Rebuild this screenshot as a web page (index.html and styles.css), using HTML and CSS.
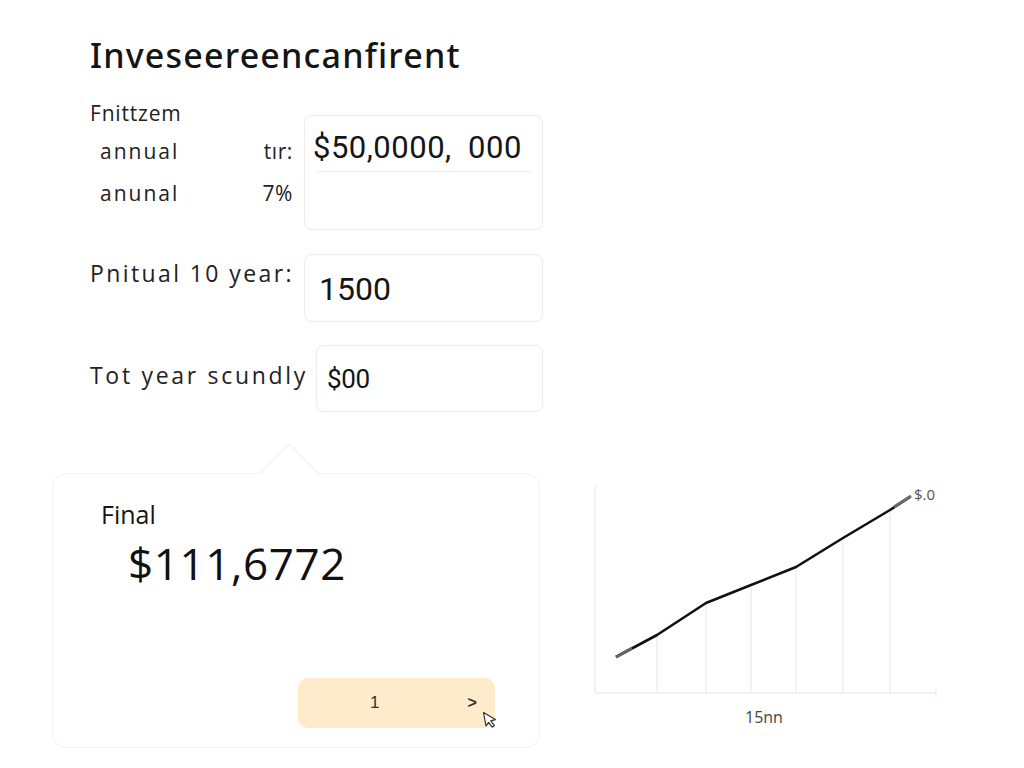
FILE: index.html
```html
<!DOCTYPE html>
<html>
<head>
<meta charset="utf-8">
<link rel="stylesheet" href="styles.css">
</head>
<body>
<div class="page">
  <section class="form">
    <h1 class="title">Inveseereencanfirent</h1>
    <div class="row row1">
      <div class="labels">
        <div class="lbl l1">Fnittzem</div>
        <div class="lbl l2"><span class="w">annual</span><span>tır:</span></div>
        <div class="lbl l3"><span class="w">anunal</span><span>7%</span></div>
      </div>
      <div class="box box1">
        <div class="val v1">$50,0000,&nbsp; 000</div>
        <div class="underline"></div>
      </div>
    </div>
    <div class="row row2">
      <div class="lbl rl2">Pnitual 10 year:</div>
      <div class="box box2"><div class="val v2">1500</div></div>
    </div>
    <div class="row row3">
      <div class="lbl rl3">Tot year scundly</div>
      <div class="box box3"><div class="val v3">$00</div></div>
    </div>
  </section>
  <section class="bottom">
    <div class="card">
      <div class="final">Final</div>
      <div class="amount">$111,6772</div>
      <div class="btn">
        <span class="num">1</span>
        <span class="arrow">&gt;</span>
        <svg class="cursor" width="17" height="18" viewBox="0 0 17 18"><path d="M1.5 1.5 L4 15 L6.6 11.4 L10.2 16.2 L12.4 14.6 L8.8 9.8 L13.4 8.6 Z" fill="#fff" stroke="#333" stroke-width="1.2" stroke-linejoin="round"/></svg>
      </div>
    </div>
    <div class="chart">
      <svg width="400" height="290" viewBox="0 0 400 290">
        <g stroke="#e3eef3" stroke-width="1.2">
          <line x1="97" y1="175" x2="97" y2="233"/>
          <line x1="146" y1="143" x2="146" y2="233"/>
          <line x1="191" y1="125" x2="191" y2="233"/>
          <line x1="236" y1="107" x2="236" y2="233"/>
          <line x1="283" y1="78" x2="283" y2="233"/>
          <line x1="330" y1="50" x2="330" y2="233"/>
        </g>
        <g stroke="#e6e8ea" stroke-width="1.2">
          <line x1="35" y1="26" x2="35" y2="233"/>
          <line x1="35" y1="233" x2="376" y2="233"/>
          <line x1="376" y1="229" x2="376" y2="237"/>
        </g>
        <polyline points="56,197 97,175 146,143 191,125 236,107 283,78 330,50 350,37" fill="none" stroke="#111" stroke-width="2.6" stroke-linejoin="round"/>
        <line x1="56" y1="197" x2="72" y2="188" stroke="#666" stroke-width="3"/>
        <line x1="334" y1="47" x2="351" y2="36" stroke="#6a6a6a" stroke-width="3.2"/>
        <text x="354" y="40" class="ylabel">$.0</text>
        <text x="185" y="263" class="xlabel">15nn</text>
      </svg>
    </div>
  </section>
</div>
</body>
</html>
```

FILE: styles.css
```css
* { box-sizing: border-box; }
html, body { margin: 0; padding: 0; background: #ffffff; }
body {
  font-family: "Open Sans", "DejaVu Sans", sans-serif;
  color: #1a1a1a;
  width: 1024px;
  height: 768px;
  overflow: hidden;
}
.page {
  padding-left: 52px;
}
.form {
  margin-left: 38px;
  width: 453px;
  padding-top: 32px;
}
.title {
  margin: 0;
  font-family: "Noto Sans", sans-serif;
  font-weight: 500;
  font-size: 34px;
  line-height: 46px;
  letter-spacing: 1.2px;
  color: #151515;
}
.lbl {
  font-size: 21px;
  letter-spacing: 0.6px;
  color: #222;
  font-weight: 400;
}
.row { display: flex; align-items: flex-start; }
.row1 { margin-top: 15px; }
.labels { width: 214px; }
.l1 { line-height: 40px; letter-spacing: 0.8px; }
.l2 { line-height: 36px; }
.l3 { line-height: 48px; }
.l2, .l3 {
  display: flex;
  justify-content: space-between;
  padding-left: 10px;
  padding-right: 11px;
}
.w { letter-spacing: 2px; }
.box {
  border: 1px solid #ececec;
  border-radius: 8px;
  background: #fff;
  box-shadow: 0 0 3px rgba(0,0,0,0.03);
}
.box1 {
  width: 239px;
  height: 115px;
  margin-top: 22px;
  padding: 12px 8px 0 8px;
}
.val {
  font-family: "Roboto", "Liberation Sans", sans-serif;
  color: #151515;
  white-space: nowrap;
}
.v1 { font-size: 31px; line-height: 40px; letter-spacing: 0.5px; }
.underline {
  height: 1px;
  background: #f1ebc6;
  margin: 3px 0 0 4px;
  width: 214px;
}
.row2 { margin-top: 24px; }
.rl2 { width: 214px; line-height: 38px; font-size: 23px; letter-spacing: 2.4px; }
.box2 {
  width: 239px;
  height: 68px;
  padding: 14px 0 0 14px;
}
.v2 { font-size: 32px; line-height: 40px; letter-spacing: 0; }
.row3 { margin-top: 23px; }
.rl3 { width: 226px; line-height: 60px; font-size: 23px; letter-spacing: 2.7px; white-space: nowrap; }
.box3 {
  width: 227px;
  height: 67px;
  padding: 14px 0 0 10px;
}
.v3 { font-size: 26px; line-height: 38px; letter-spacing: -0.4px; }

.bottom {
  display: flex;
  align-items: flex-start;
  margin-top: 48px;
}
.card {
  position: relative;
  width: 488px;
  height: 275px;
  margin-top: 13px;
  border: 1px solid #f2f2f2;
  border-radius: 14px;
  background: #fff;
  padding: 25px 0 0 48px;
}
.card::before {
  content: "";
  position: absolute;
  left: 216px;
  top: -22px;
  width: 40px;
  height: 40px;
  background: #fff;
  border-left: 1px solid #f0f0f0;
  border-top: 1px solid #f0f0f0;
  transform: rotate(45deg);
}
.final {
  position: relative;
  font-size: 25px;
  line-height: 30px;
  color: #151515;
}
.amount {
  position: relative;
  margin-top: 9px;
  margin-left: 27px;
  font-size: 44px;
  line-height: 50px;
  letter-spacing: 0.6px;
  color: #111;
}
.btn {
  position: relative;
  margin-top: 90px;
  margin-left: 197px;
  width: 197px;
  height: 50px;
  border-radius: 10px;
  background: #fdebcc;
  display: flex;
  align-items: center;
  font-family: "Liberation Sans", sans-serif;
  font-size: 17px;
  color: #333;
}
.num { margin-left: 72px; }
.arrow { margin-left: 88px; font-weight: 700; font-size: 16px; }
.cursor {
  position: absolute;
  left: 184px;
  top: 33px;
}
.chart {
  margin-left: 20px;
}
.chart svg { display: block; }
.ylabel {
  font-family: "Open Sans", sans-serif;
  font-size: 15px;
  fill: #555;
}
.xlabel {
  font-family: "Open Sans", sans-serif;
  font-size: 16px;
  fill: #444;
}
```
